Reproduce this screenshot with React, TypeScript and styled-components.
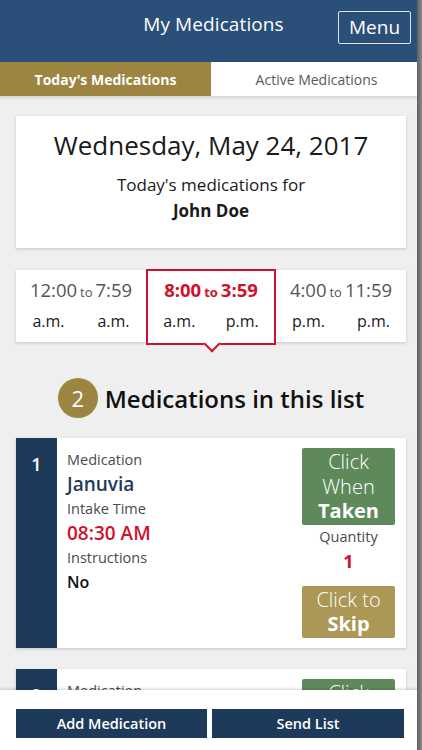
import React from "react";
import styled, { createGlobalStyle } from "styled-components";

const Global = createGlobalStyle`
  html, body { margin: 0; padding: 0; background: #efefef; }
  body { font-family: "Open Sans", "Noto Sans", sans-serif; }
  * { box-sizing: border-box; }
`;

const Screen = styled.div`
  position: relative;
  width: 422px;
  height: 750px;
  display: flex;
  flex-direction: column;
  overflow: hidden;
  background: #efefef;
`;

const EdgeShade = styled.div`
  position: absolute;
  top: 0;
  right: 0;
  width: 5px;
  height: 100%;
  background: linear-gradient(to right, #5f5f5f, #8a8a8a);
  z-index: 5;
`;

const Header = styled.header`
  height: 62px;
  flex: none;
  background: #2a4f78;
  display: grid;
  grid-template-columns: 1fr auto 1fr;
  align-items: center;
  padding: 0 11px 0 16px;
  color: #fff;
`;

const Title = styled.h1`
  grid-column: 2;
  margin: 0 0 14px;
  font-size: 19px;
  font-weight: 500;
  letter-spacing: 0.1px;
`;

const MenuButton = styled.button`
  grid-column: 3;
  justify-self: end;
  margin-bottom: 8px;
  width: 73px;
  height: 33px;
  border: 1.5px solid rgba(255, 255, 255, 0.85);
  border-radius: 2px;
  background: transparent;
  color: #fff;
  font-family: inherit;
  font-size: 19px;
  padding: 0;
`;

const Tabs = styled.nav`
  height: 34px;
  flex: none;
  display: grid;
  grid-template-columns: 211px 1fr;
  box-shadow: 0 2px 3px rgba(0, 0, 0, 0.12);
  position: relative;
  z-index: 1;
`;

const Tab = styled.div<{ $active?: boolean }>`
  display: flex;
  align-items: center;
  justify-content: center;
  font-size: 14px;
  font-weight: ${(p) => (p.$active ? 700 : 400)};
  background: ${(p) => (p.$active ? "#9b8541" : "#fff")};
  color: ${(p) => (p.$active ? "#fff" : "#5a5a5a")};
`;

const Body = styled.main`
  flex: 1;
  min-height: 0;
  overflow: hidden;
  padding: 20px 16px 0;
  display: flex;
  flex-direction: column;

  & > * {
    flex: none;
  }
`;

const Card = styled.section`
  background: #fff;
  box-shadow: 0 1px 3px rgba(0, 0, 0, 0.18);
`;

const DateCard = styled(Card)`
  height: 132px;
  padding-top: 12px;
  text-align: center;
  color: #1a1a1a;
`;

const DateLine = styled.div`
  font-size: 26px;
  line-height: 34px;
`;

const ForLine = styled.div`
  margin-top: 10px;
  font-size: 17px;
  line-height: 26px;
`;

const NameLine = styled.div`
  font-size: 17px;
  line-height: 26px;
  font-weight: 700;
`;

const TimeCard = styled(Card)`
  margin-top: 22px;
  height: 72px;
  display: grid;
  grid-template-columns: repeat(3, 1fr);
`;

const Slot = styled.div<{ $active?: boolean }>`
  position: relative;
  display: flex;
  flex-direction: column;
  align-items: center;
  padding-top: ${(p) => (p.$active ? "7px" : "8px")};
  margin: ${(p) => (p.$active ? "-1px 0 -3px" : "0")};
  border: ${(p) => (p.$active ? "2px solid #d0112b" : "none")};
  background: #fff;
  z-index: ${(p) => (p.$active ? 2 : 0)};
  color: ${(p) => (p.$active ? "#d0112b" : "#555")};
  font-weight: ${(p) => (p.$active ? 700 : 400)};

  ${(p) =>
    p.$active &&
    `
    &::after {
      content: "";
      position: absolute;
      left: 50%;
      bottom: -7px;
      width: 10px;
      height: 10px;
      margin-left: -5px;
      background: #fff;
      border-right: 2px solid #d0112b;
      border-bottom: 2px solid #d0112b;
      transform: rotate(45deg);
    }
  `}
`;

const SlotTimes = styled.div`
  font-size: 18.5px;
  line-height: 24px;
  white-space: nowrap;
`;

const To = styled.span`
  font-size: 13px;
  margin: 0 3px;
`;

const Periods = styled.div`
  display: flex;
  width: 100%;
  justify-content: space-around;
  margin-top: 7px;
  font-size: 16px;
  line-height: 20px;
  color: #1a1a1a;
  font-weight: 400;
`;

const ListHeading = styled.h2`
  margin: 36px 0 20px;
  display: flex;
  align-items: center;
  justify-content: center;
  gap: 7px;
  font-size: 24px;
  font-weight: 600;
  color: #111;
  height: 40px;
`;

const Count = styled.span`
  width: 40px;
  height: 40px;
  border-radius: 50%;
  background: #9b8541;
  color: #fff;
  font-size: 22px;
  font-weight: 500;
  display: flex;
  align-items: center;
  justify-content: center;
`;

const MedCard = styled(Card)`
  display: flex;
  min-height: 210px;
  margin-bottom: 21px;
`;

const Stripe = styled.div`
  width: 41px;
  flex: none;
  background: #1d3a5a;
  color: #fff;
  font-size: 18px;
  font-weight: 600;
  text-align: center;
  padding-top: 14px;
`;

const MedInfo = styled.div`
  flex: 1;
  padding: 10px 0 0 10px;
`;

const Label = styled.div<{ $lh?: number }>`
  font-size: 14.5px;
  line-height: ${(p) => p.$lh ?? 24}px;
  color: #4a4a4a;
`;

const Value = styled.div<{ $color?: string; $size?: number; $lh?: number }>`
  font-size: ${(p) => p.$size ?? 19}px;
  line-height: ${(p) => p.$lh ?? 24}px;
  font-weight: 600;
  color: ${(p) => p.$color ?? "#111"};
`;

const Actions = styled.div`
  width: 93px;
  margin: 10px 11px 0 0;
  display: flex;
  flex-direction: column;
  align-items: center;
`;

const ActionButton = styled.button<{ $bg: string }>`
  width: 93px;
  border: none;
  border-radius: 2px;
  background: ${(p) => p.$bg};
  color: #fff;
  font-family: inherit;
  font-size: 20px;
  font-weight: 300;
  line-height: 24.5px;
  padding: 2px 0 1px;
  display: flex;
  flex-direction: column;
  align-items: center;
`;

const Strong = styled.span`
  font-weight: 700;
`;

const QtyLabel = styled.div`
  margin-top: 2px;
  font-size: 14.5px;
  line-height: 20px;
  color: #4a4a4a;
`;

const Qty = styled.div`
  font-size: 18px;
  line-height: 28px;
  font-weight: 700;
  color: #d0112b;
  margin-bottom: 11px;
`;

const Footer = styled.footer`
  height: 60px;
  flex: none;
  background: #fff;
  box-shadow: 0 -1px 3px rgba(0, 0, 0, 0.18);
  display: grid;
  grid-template-columns: 191px 192px;
  gap: 5px;
  padding: 19px 0 0 16px;
  align-items: start;
  position: relative;
  z-index: 3;
`;

const FooterButton = styled.button`
  height: 29px;
  border: none;
  background: #1d3a5a;
  color: #fff;
  font-family: inherit;
  font-size: 14.5px;
  font-weight: 600;
  padding: 0;
`;

type Med = { n: number; name: string; time: string; instr: string; qty: number };

const meds: Med[] = [
  { n: 1, name: "Januvia", time: "08:30 AM", instr: "No", qty: 1 },
  { n: 2, name: "Metformin", time: "09:00 AM", instr: "No", qty: 1 },
];

function MedicationCard({ m }: { m: Med }) {
  return (
    <MedCard>
      <Stripe>{m.n}</Stripe>
      <MedInfo>
        <Label>Medication</Label>
        <Value $color="#1d3a5a">{m.name}</Value>
        <Label $lh={25}>Intake Time</Label>
        <Value $color="#d0112b">{m.time}</Value>
        <Label $lh={26}>Instructions</Label>
        <Value $size={16} $lh={22}>{m.instr}</Value>
      </MedInfo>
      <Actions>
        <ActionButton $bg="#5e8a5b">
          <span>Click</span>
          <span>When</span>
          <Strong>Taken</Strong>
        </ActionButton>
        <QtyLabel>Quantity</QtyLabel>
        <Qty>{m.qty}</Qty>
        <ActionButton $bg="#ab9756">
          <span>Click to</span>
          <Strong>Skip</Strong>
        </ActionButton>
      </Actions>
    </MedCard>
  );
}

export default function App() {
  return (
    <Screen>
      <Global />
      <Header>
        <Title>My Medications</Title>
        <MenuButton>Menu</MenuButton>
      </Header>
      <Tabs>
        <Tab $active>Today's Medications</Tab>
        <Tab>Active Medications</Tab>
      </Tabs>
      <Body>
        <DateCard>
          <DateLine>Wednesday, May 24, 2017</DateLine>
          <ForLine>Today's medications for</ForLine>
          <NameLine>John Doe</NameLine>
        </DateCard>
        <TimeCard>
          <Slot>
            <SlotTimes>
              12:00<To>to</To>7:59
            </SlotTimes>
            <Periods>
              <span>a.m.</span>
              <span>a.m.</span>
            </Periods>
          </Slot>
          <Slot $active>
            <SlotTimes>
              8:00<To>to</To>3:59
            </SlotTimes>
            <Periods>
              <span>a.m.</span>
              <span>p.m.</span>
            </Periods>
          </Slot>
          <Slot>
            <SlotTimes>
              4:00<To>to</To>11:59
            </SlotTimes>
            <Periods>
              <span>p.m.</span>
              <span>p.m.</span>
            </Periods>
          </Slot>
        </TimeCard>
        <ListHeading>
          <Count>2</Count>
          Medications in this list
        </ListHeading>
        {meds.map((m) => (
          <MedicationCard key={m.n} m={m} />
        ))}
      </Body>
      <Footer>
        <FooterButton>Add Medication</FooterButton>
        <FooterButton>Send List</FooterButton>
      </Footer>
      <EdgeShade />
    </Screen>
  );
}
